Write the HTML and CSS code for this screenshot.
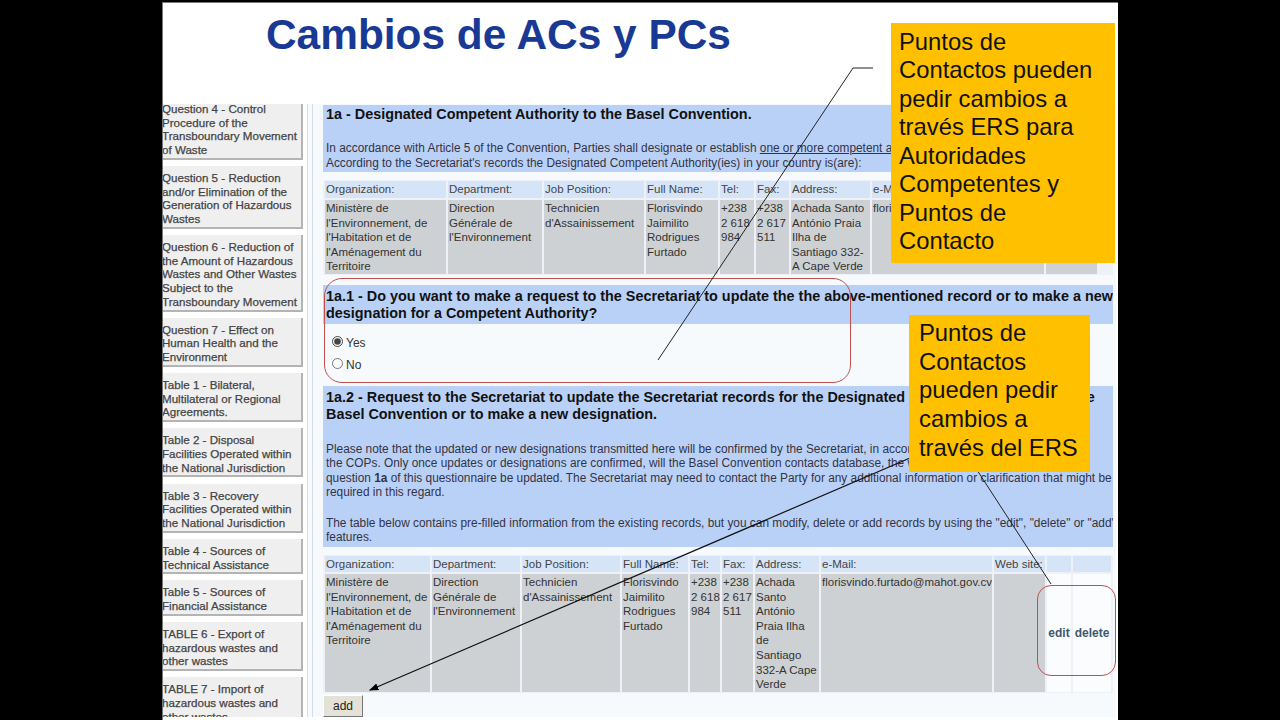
FILE: index.html
```html
<html>
<head>
    <title>Cambios de ACs y PCs</title>
    <link rel="stylesheet" href="styles.css">
</head>

<body>
<div class="stage">
    <div class="slide">
        <h1 class="title">Cambios de ACs y PCs</h1>

        <div class="capture">
            <div class="sidebar">
                <div class="nav-item">Question 4 - Control<br>Procedure of the<br>Transboundary Movement<br>of Waste</div>
                <div class="nav-item">Question 5 - Reduction<br>and/or Elimination of the<br>Generation of Hazardous<br>Wastes</div>
                <div class="nav-item">Question 6 - Reduction of<br>the Amount of Hazardous<br>Wastes and Other Wastes<br>Subject to the<br>Transboundary Movement</div>
                <div class="nav-item">Question 7 - Effect on<br>Human Health and the<br>Environment</div>
                <div class="nav-item">Table 1 - Bilateral,<br>Multilateral or Regional<br>Agreements.</div>
                <div class="nav-item">Table 2 - Disposal<br>Facilities Operated within<br>the National Jurisdiction</div>
                <div class="nav-item">Table 3 - Recovery<br>Facilities Operated within<br>the National Jurisdiction</div>
                <div class="nav-item">Table 4 - Sources of<br>Technical Assistance</div>
                <div class="nav-item">Table 5 - Sources of<br>Financial Assistance</div>
                <div class="nav-item">TABLE 6 - Export of<br>hazardous wastes and<br>other wastes</div>
                <div class="nav-item">TABLE 7 - Import of<br>hazardous wastes and<br>other wastes</div>
            </div>

            <div class="main">
                <div class="panel panel-a">
                    <h2>1a - Designated Competent Authority to the Basel Convention.</h2>
                    <p>In accordance with Article 5 of the Convention, Parties shall designate or establish <u>one or more competent authorities</u>.<br>According to the Secretariat's records the Designated Competent Authority(ies) in your country is(are):</p>
                </div>

                <div class="records records-top">
                    <div class="head">Organization:</div>
                    <div class="head">Department:</div>
                    <div class="head">Job Position:</div>
                    <div class="head">Full Name:</div>
                    <div class="head">Tel:</div>
                    <div class="head">Fax:</div>
                    <div class="head">Address:</div>
                    <div class="head">e-Mail:</div>
                    <div class="head">Web site:</div>
                    <div class="cell">Ministère de<br>l'Environnement, de<br>l'Habitation et de<br>l'Aménagement du<br>Territoire</div>
                    <div class="cell">Direction<br>Générale de<br>l'Environnement</div>
                    <div class="cell">Technicien<br>d'Assainissement</div>
                    <div class="cell">Florisvindo<br>Jaimilito<br>Rodrigues<br>Furtado</div>
                    <div class="cell">+238<br>2 618<br>984</div>
                    <div class="cell">+238<br>2 617<br>511</div>
                    <div class="cell">Achada Santo<br>António Praia<br>Ilha de<br>Santiago 332-<br>A Cape Verde</div>
                    <div class="cell">florisvindo.furtado@mahot.gov.cv</div>
                    <div class="cell"></div>
                </div>

                <div class="panel panel-b">
                    <h2>1a.1 - Do you want to make a request to the Secretariat to update the the above-mentioned record or to make a new<br>designation for a Competent Authority?</h2>
                </div>
                <div class="choices">
                    <label class="choice"><input type="radio" name="update" checked>Yes</label>
                    <label class="choice"><input type="radio" name="update">No</label>
                </div>

                <div class="panel panel-c">
                    <h2>1a.2 - Request to the Secretariat to update the Secretariat records for the Designated Competent Authority to the<br>Basel Convention or to make a new designation.</h2>
                    <p>Please note that the updated or new designations transmitted here will be confirmed by the Secretariat, in accordance with the decisions of<br>the COPs. Only once updates or designations are confirmed, will the Basel Convention contacts database, the website and the table under<br>question <b>1a</b> of this questionnaire be updated. The Secretariat may need to contact the Party for any additional information or clarification that might be<br>required in this regard.</p>
                    <p class="note">The table below contains pre-filled information from the existing records, but you can modify, delete or add records by using the "edit", "delete" or "add"<br>features.</p>
                </div>

                <div class="records records-bottom">
                    <div class="head">Organization:</div>
                    <div class="head">Department:</div>
                    <div class="head">Job Position:</div>
                    <div class="head">Full Name:</div>
                    <div class="head">Tel:</div>
                    <div class="head">Fax:</div>
                    <div class="head">Address:</div>
                    <div class="head">e-Mail:</div>
                    <div class="head">Web site:</div>
                    <div class="head"></div>
                    <div class="head"></div>
                    <div class="cell">Ministère de<br>l'Environnement, de<br>l'Habitation et de<br>l'Aménagement du<br>Territoire</div>
                    <div class="cell">Direction<br>Générale de<br>l'Environnement</div>
                    <div class="cell">Technicien<br>d'Assainissement</div>
                    <div class="cell">Florisvindo<br>Jaimilito<br>Rodrigues<br>Furtado</div>
                    <div class="cell">+238<br>2 618<br>984</div>
                    <div class="cell">+238<br>2 617<br>511</div>
                    <div class="cell">Achada<br>Santo<br>António<br>Praia Ilha<br>de<br>Santiago<br>332-A Cape<br>Verde</div>
                    <div class="cell">florisvindo.furtado@mahot.gov.cv</div>
                    <div class="cell"></div>
                    <div class="action">edit</div>
                    <div class="action">delete</div>
                </div>

                <button class="add-btn">add</button>
            </div>
        </div>
    </div>

    <!-- annotations drawn on top of the capture -->
    <div class="ring ring-choice"></div>
    <div class="ring ring-actions"></div>

    <svg class="leaders" width="1280" height="720" viewBox="0 0 1280 720">
        <defs>
            <marker id="arrow" markerWidth="8" markerHeight="8" refX="7" refY="4" orient="auto">
                <path d="M0 1 L8 4 L0 7 Z" fill="#000"/>
            </marker>
        </defs>
        <path d="M873 68 H853 L658 360" fill="none" stroke="#222" stroke-width="1"/>
        <path d="M910 458 L370 690" fill="none" stroke="#111" stroke-width="1.2" marker-end="url(#arrow)"/>
        <path d="M977 470 L1051 584" fill="none" stroke="#222" stroke-width="1"/>
    </svg>

    <div class="callout callout-top">Puntos de<br>Contactos pueden<br>pedir cambios a<br>través ERS para<br>Autoridades<br>Competentes y<br>Puntos de<br>Contacto</div>
    <div class="callout callout-mid">Puntos de<br>Contactos<br>pueden pedir<br>cambios a<br>través del ERS</div>
</div>
</body>
</html>
```

FILE: styles.css
```css
body {
    margin: 0;
    background-color: #000;
    font-family: "Liberation Sans", Arial, sans-serif;
}

.stage {
    position: relative;
    display: flex;
    justify-content: center;
    width: 1280px;
    height: 720px;
    overflow: hidden;
}

.slide {
    width: 956px;
    height: 718px;
    margin-top: 2px;
    background-color: #fff;
    border-top: 1px solid #777;
    border-left: 1px solid #777;
    box-sizing: border-box;
}

.title {
    height: 101px;
    margin: 0;
    padding: 8px 0 0 103px;
    box-sizing: border-box;
    color: #183a94;
    font-size: 42.4px;
    line-height: 48px;
    font-weight: bold;
}

.capture {
    display: flex;
    width: 953px;
    height: 613px;
    overflow: hidden;
    background-color: #f7fafd;
}

/* left menu */
.sidebar {
    flex: none;
    width: 140px;
    margin-top: -7px;
    padding-right: 4px;
    background-color: #fff;
    border-right: 1px solid #d5dce6;
    overflow: hidden;
}

.nav-item {
    margin-bottom: 6.2px;
    padding: 5px 0 1px 0;
    margin-left: -1px;
    background-color: #efefef;
    border-right: 2px solid #b4b4b4;
    border-bottom: 2px solid #b4b4b4;
    box-sizing: border-box;
    color: #444;
    font-size: 11.6px;
    line-height: 13.7px;
    -webkit-text-stroke: 0.25px #444;
    white-space: nowrap;
}

.main {
    flex: none;
    width: 791px;
    margin-left: 4px;
    padding: 1px 0 0 10px;
    border-left: 1px solid #d5dce6;
    color: #333;
    font-size: 12px;
}

/* blue text blocks */
.panel {
    width: 790px;
    padding: 1px 0 0 3px;
    box-sizing: border-box;
    background-color: #bad1f7;
    overflow: hidden;
    white-space: nowrap;
}

.panel h2 {
    margin: 0;
    color: #111;
    font-size: 14.4px;
    line-height: 17px;
}

.panel p {
    margin: 0;
    color: #334;
    font-size: 11.87px;
    line-height: 14.6px;
}

.panel-a {
    height: 67px;
}

.panel-a p {
    margin-top: 18px;
}

.panel-b {
    height: 39px;
    margin-top: 10px;
    padding-top: 3px;
}

.panel-c {
    height: 161px;
    padding-top: 3px;
}

.panel-c p {
    margin-top: 18.5px;
}

.panel-c .note {
    margin-top: 16px;
}

/* record tables */
.records {
    display: grid;
    gap: 2px;
    width: 790px;
    padding: 1px 1px 1px 2px;
    box-sizing: border-box;
    background-color: #eef2f8;
    margin-top: 8px;
    font-size: 11.5px;
    line-height: 14.6px;
}

.records-top {
    grid-template-columns: 121px 94px 100px 72px 34px 33px 79px 172px 51px;
    grid-template-rows: 17px 74px;
}

.records-bottom {
    grid-template-columns: 105px 88px 98px 66px 30px 31px 64px 171px 51px 24px 38px;
    grid-template-rows: 16px 118px;
}

.head {
    padding-left: 1px;
    background-color: #d6e4f8;
    color: #444;
    line-height: 17px;
    white-space: nowrap;
    overflow: hidden;
}

.cell {
    padding: 1px 0 0 1px;
    background-color: #cdd1d4;
    color: #333;
    white-space: nowrap;
    overflow: hidden;
}

.action {
    display: flex;
    align-items: center;
    justify-content: center;
    background-color: #fbfcfe;
    color: #3d5a6b;
    font-weight: bold;
    font-size: 12px;
}

/* radio buttons */
.choices {
    height: 62px;
    padding: 8px 0 0 9px;
    box-sizing: border-box;
}

.choice {
    display: flex;
    align-items: center;
    height: 22px;
    color: #333;
    font-size: 12px;
}

.choice input {
    width: 11px;
    height: 11px;
    margin: -4px 3px 0 0;
    accent-color: #444;
}

.add-btn {
    display: block;
    width: 40px;
    height: 22px;
    margin-top: 2px;
    padding: 0;
    background-color: #e4e1d6;
    border: 1px solid;
    border-color: #fff #777 #777 #fff;
    color: #222;
    font-family: "Liberation Sans", Arial, sans-serif;
    font-size: 12px;
}

/* annotations */
.ring {
    position: absolute;
    border: 1.5px solid #c0504d;
    box-sizing: border-box;
}

.ring-choice {
    left: 324px;
    top: 278px;
    width: 527px;
    height: 105px;
    border-radius: 18px;
}

.ring-actions {
    left: 1037px;
    top: 585px;
    width: 79px;
    height: 91px;
    border-radius: 14px;
}

.leaders {
    position: absolute;
    left: 0;
    top: 0;
}

.callout {
    position: absolute;
    box-sizing: border-box;
    background-color: #ffc000;
    color: #111;
    font-size: 23.8px;
    line-height: 28.7px;
    white-space: nowrap;
}

.callout-top {
    left: 891px;
    top: 23px;
    width: 224px;
    height: 240px;
    padding: 5px 0 0 8px;
    line-height: 28.45px;
}

.callout-mid {
    left: 909px;
    top: 315px;
    width: 181px;
    height: 157px;
    padding: 4px 0 0 10px;
}
```
